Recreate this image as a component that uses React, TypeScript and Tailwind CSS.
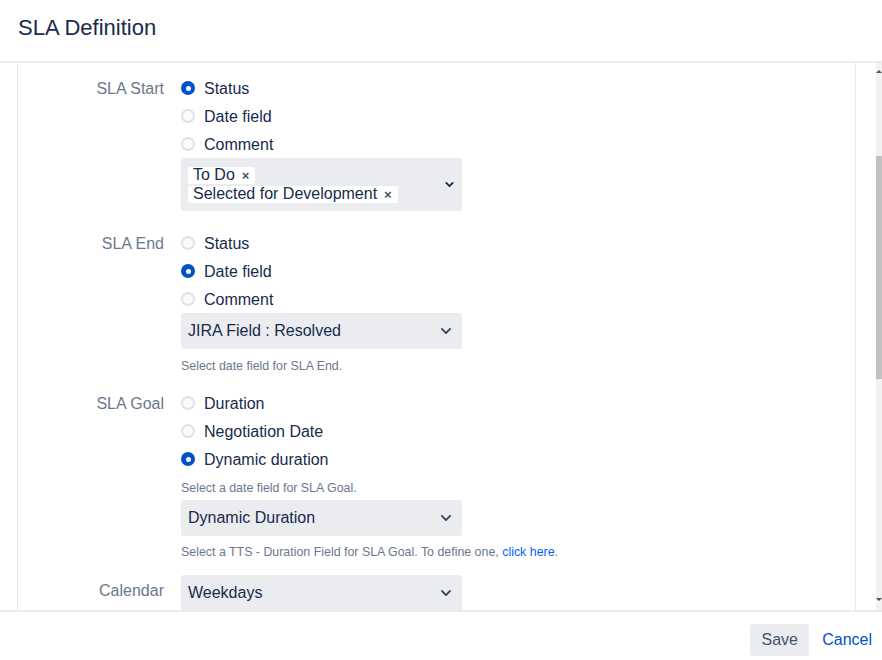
import { ReactNode } from "react";

const font = { fontFamily: '"Liberation Sans", Arial, sans-serif' };

function Radio({ label, checked }: { label: string; checked?: boolean }) {
  return (
    <div className="flex h-7 items-center">
      {checked ? (
        <span className="flex h-[14px] w-[14px] items-center justify-center rounded-full bg-[#0052cc]">
          <span className="h-[5px] w-[5px] rounded-full bg-white" />
        </span>
      ) : (
        <span className="h-[14px] w-[14px] rounded-full border-2 border-[#dfe1e6] bg-[#fafbfc]" />
      )}
      <span className="ml-[9px] pt-[2px] text-[16px] text-[#172b4d]">{label}</span>
    </div>
  );
}

function Chevron() {
  return (
    <svg width="14" height="14" viewBox="0 0 24 24" className="text-[#344563]">
      <path d="M5 8.5l7 7 7-7" fill="none" stroke="currentColor" strokeWidth="3.2" strokeLinecap="round" strokeLinejoin="round" />
    </svg>
  );
}

function Select({ value, className = "" }: { value: string; className?: string }) {
  return (
    <div className={`flex h-9 w-[281px] items-center justify-between rounded-[3px] bg-[#ebecf0] pl-[7px] pr-[9px] ${className}`}>
      <span className="text-[16px] text-[#172b4d]">{value}</span>
      <Chevron />
    </div>
  );
}

function Tag({ text }: { text: string }) {
  return (
    <span className="flex h-[17px] items-center rounded-[2px] bg-white pl-[5px] pr-[6px] text-[16px] leading-none text-[#172b4d]">
      {text}
      <span className="ml-[7px] text-[13px] font-bold text-[#42526e]">×</span>
    </span>
  );
}

function Help({ children, className = "" }: { children: ReactNode; className?: string }) {
  return <p className={`text-[12.4px] leading-4 text-[#6b778c] ${className}`}>{children}</p>;
}

function Row({ label, labelClass = "", children, className = "" }: { label: string; labelClass?: string; children: ReactNode; className?: string }) {
  return (
    <div className={`flex ${className}`}>
      <div className={`w-[147px] pr-[1px] text-right text-[16px] text-[#6b778c] ${labelClass}`}>{label}</div>
      <div className="ml-[16px] flex flex-col">{children}</div>
    </div>
  );
}

export default function App() {
  return (
    <div className="flex h-[660px] w-[882px] flex-col overflow-hidden bg-white" style={font}>
      <header className="flex h-[63px] shrink-0 items-center border-b-2 border-[#ebecf0] pb-[6px] pl-[18px]">
        <h1 className="text-[22px] text-[#172b4d]">SLA Definition</h1>
      </header>

      <div className="flex h-[547px] shrink-0">
        <div className="ml-[17px] w-[839px] overflow-hidden border-x border-[#e6e6e6] pt-[11px]">
          <Row label="SLA Start" labelClass="pt-[1px] leading-7">
            <Radio label="Status" checked />
            <Radio label="Date field" />
            <Radio label="Comment" />
            <div className="flex h-[53px] w-[281px] items-center justify-between rounded-[3px] bg-[#ebecf0] pl-[7px] pr-[7px]">
              <div className="flex flex-col items-start gap-[2px]">
                <Tag text="To Do" />
                <Tag text="Selected for Development" />
              </div>
              <svg width="11" height="11" viewBox="0 0 24 24" className="text-[#172b4d]">
                <path d="M5 8.5l7 7 7-7" fill="none" stroke="currentColor" strokeWidth="4" strokeLinecap="round" strokeLinejoin="round" />
              </svg>
            </div>
          </Row>

          <Row label="SLA End" labelClass="pt-[1px] leading-7" className="mt-[18px]">
            <Radio label="Status" />
            <Radio label="Date field" checked />
            <Radio label="Comment" />
            <Select value="JIRA Field : Resolved" />
            <Help className="mt-[9px]">Select date field for SLA End.</Help>
          </Row>

          <Row label="SLA Goal" labelClass="pt-[1px] leading-7" className="mt-[15px]">
            <Radio label="Duration" />
            <Radio label="Negotiation Date" />
            <Radio label="Dynamic duration" checked />
            <Help className="mt-[7px]">Select a date field for SLA Goal.</Help>
            <Select value="Dynamic Duration" className="mt-[4px]" />
            <Help className="mt-[8px]">
              Select a TTS - Duration Field for SLA Goal. To define one,{" "}
              <span className="text-[#0065ff]">click here</span>.
            </Help>
          </Row>

          <Row label="Calendar" labelClass="leading-8" className="mt-[15px]">
            <Select value="Weekdays" />
          </Row>
        </div>

        <div className="ml-auto flex w-[6px] flex-col bg-[#f1f1f1]">
          <div className="flex h-[22px] items-start justify-center pt-[7px]">
            <span className="h-0 w-0 border-x-[3px] border-b-[3px] border-x-transparent border-b-[#505050]" />
          </div>
          <div className="mt-[71px] h-[223px] bg-[#c1c1c1]" />
          <div className="mt-auto flex h-[22px] items-end justify-center pb-[9px]">
            <span className="h-0 w-0 border-x-[3px] border-t-[3px] border-x-transparent border-t-[#505050]" />
          </div>
        </div>
      </div>

      <footer className="flex flex-1 items-start justify-end border-t-2 border-[#ebecf0] pr-[10px] pt-[12px]">
        <button type="button" className="h-8 w-[59px] rounded-[3px] bg-[#ebecf0] text-[16px] text-[#42526e]">
          Save
        </button>
        <button type="button" className="ml-[13px] h-8 text-[16px] text-[#0052cc]">
          Cancel
        </button>
      </footer>
    </div>
  );
}
